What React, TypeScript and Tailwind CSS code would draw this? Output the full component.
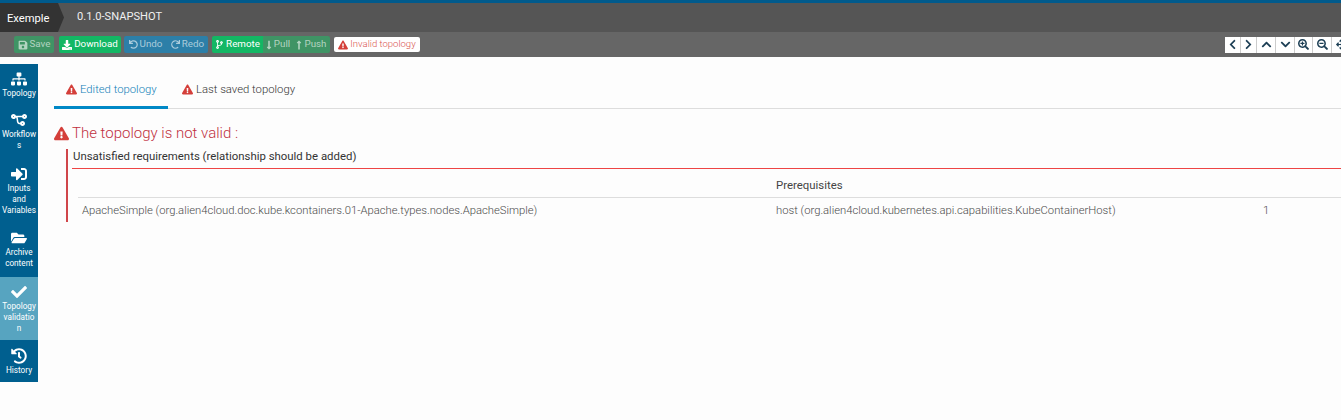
import { ReactNode } from "react";
import {
  FaSitemap, FaSave, FaDownload, FaUndo, FaRedo, FaCodeBranch, FaLongArrowAltDown, FaLongArrowAltUp,
  FaExclamationTriangle, FaChevronLeft, FaChevronRight, FaChevronUp, FaChevronDown,
  FaSearchPlus, FaSearchMinus, FaArrowsAlt, FaSignInAlt, FaFolderOpen, FaCheck, FaHistory,
} from "react-icons/fa";

function ToolButton({icon, label, color, width, dim, first, last}: {
  icon: ReactNode, label: string, color: string, width: string, dim?: boolean, first?: boolean, last?: boolean
}) {
  return (
    <div className={`flex h-[17px] items-center justify-center gap-[2px] text-[9.8px] ${width} ${color} ${dim ? "text-[#ffffff99]" : "text-white"} ${first ? "rounded-l-[2px]" : ""} ${last ? "rounded-r-[2px]" : ""}`}>
      {icon}
      <span>{label}</span>
    </div>
  );
}

function NavItem({icon, lines, active, height, top}: {icon: ReactNode, lines: string[], active?: boolean, height: string, top: string}) {
  return (
    <div className={`flex w-[38px] flex-col items-center text-white ${top} ${height} ${active ? "bg-[#57a4c0]" : ""}`}>
      <div className="flex h-[17px] items-center text-[16px]">{icon}</div>
      <div className="mt-[1px] text-center text-[8.2px] leading-[11px]">
        {lines.map((line)=><div key={line}>{line}</div>)}
      </div>
    </div>
  );
}

const zoomButtons = [
  {icon: <FaChevronLeft />, width: "w-[15px]"},
  {icon: <FaChevronRight />, width: "w-[15px]"},
  {icon: <FaChevronUp />, width: "w-[18px]"},
  {icon: <FaChevronDown />, width: "w-[18px]"},
  {icon: <FaSearchPlus />, width: "w-[17px]"},
  {icon: <FaSearchMinus />, width: "w-[18px]"},
  {icon: <FaArrowsAlt />, width: "w-[18px]"},
];

export default function App() {
  return (
    <div className="h-[420px] w-[1341px] overflow-hidden bg-[#fdfdfd] font-['Roboto',sans-serif]">
      <div className="h-[3px] bg-[#005a8c]" />
      <div className="flex h-[29px] bg-[#555555] text-[#f0f0f0]">
        <div className="flex h-full w-[64px] items-center bg-[#333333] pl-[7px] pt-[3px] text-[11.2px] text-white [clip-path:polygon(0_0,58px_0,64px_50%,58px_100%,0_100%)]">Exemple</div>
        <div className="ml-[13px] pt-[6px] text-[11.1px]">0.1.0-SNAPSHOT</div>
      </div>
      <div className="flex h-[25px] items-center bg-[#666666] pl-[14px]">
        <ToolButton icon={<FaSave className="text-[10px]" />} label="Save" color="bg-[#3f9465]" width="w-[40px]" dim first last />
        <div className="ml-[5px]">
          <ToolButton icon={<FaDownload className="text-[10px]" />} label="Download" color="bg-[#13b764]" width="w-[62px]" first last />
        </div>
        <div className="ml-[3px] flex">
          <ToolButton icon={<FaUndo className="text-[9px]" />} label="Undo" color="bg-[#2c7fa8]" width="w-[43px]" dim first />
          <ToolButton icon={<FaRedo className="text-[9px]" />} label="Redo" color="bg-[#2c7fa8]" width="w-[41px]" dim last />
        </div>
        <div className="ml-[4px] flex">
          <ToolButton icon={<FaCodeBranch className="text-[9px]" />} label="Remote" color="bg-[#13b764]" width="w-[51px]" first />
          <ToolButton icon={<FaLongArrowAltDown className="-mx-[2px] text-[10px]" />} label="Pull" color="bg-[#3f9465]" width="w-[30px]" dim />
          <ToolButton icon={<FaLongArrowAltUp className="-mx-[2px] text-[10px]" />} label="Push" color="bg-[#3f9465]" width="w-[37px]" dim last />
        </div>
        <div className="ml-[4px] flex h-[15px] w-[86px] items-center justify-center gap-[2px] rounded-[2px] bg-white text-[9.5px] font-light text-[#d9534f]">
          <FaExclamationTriangle className="text-[10px] text-[#d43f3a]" />
          <span>Invalid topology</span>
        </div>
        <div className="ml-auto mr-[-9px] flex h-[16px] gap-[1px] bg-[#cccccc]">
          {zoomButtons.map((button, index)=>(
            <div key={index} className={`flex items-center justify-center bg-white text-[11px] text-[#1d3f55] ${button.width}`}>{button.icon}</div>
          ))}
        </div>
      </div>
      <div className="flex">
        <div className="mt-[7px] flex w-[38px] shrink-0 flex-col bg-[#005f8f]">
          <NavItem icon={<FaSitemap />} lines={["Topology"]} height="h-[42px]" top="pt-[6px]" />
          <NavItem icon={<FaCodeBranch className="rotate-90" />} lines={["Workflow", "s"]} height="h-[53px]" top="pt-[5px]" />
          <NavItem icon={<FaSignInAlt />} lines={["Inputs", "and", "Variables"]} height="h-[64px]" top="pt-[6px]" />
          <NavItem icon={<FaFolderOpen />} lines={["Archive", "content"]} height="h-[54px]" top="pt-[6px]" />
          <NavItem icon={<FaCheck />} lines={["Topology", "validatio", "n"]} height="h-[63px]" top="pt-[6px]" active />
          <NavItem icon={<FaHistory />} lines={["History"]} height="h-[42px]" top="pt-[7px]" />
        </div>
        <div className="min-w-0 flex-1 pl-[16px]">
          <div className="mt-[17px] flex h-[35px] border-b border-[#dddddd] text-[11.3px] font-light">
            <div className="flex h-[35px] w-[114px] items-start gap-[3px] border-b-[3px] border-[#0088c6] pl-[12px] pt-[8px] text-[#1080b8]">
              <FaExclamationTriangle className="mt-[2px] text-[11px] text-[#d43f3a]" />
              <span>Edited topology</span>
            </div>
            <div className="flex items-start gap-[3px] pl-[14px] pt-[8px] text-[#333333]">
              <FaExclamationTriangle className="mt-[2px] text-[11px] text-[#d43f3a]" />
              <span>Last saved topology</span>
            </div>
          </div>
          <div className="mt-[15px] flex items-center gap-[3px] text-[15px] font-light leading-[18px] text-[#c0303e]">
            <FaExclamationTriangle className="text-[15px] text-[#d43f3a]" />
            <span>The topology is not valid :</span>
          </div>
          <div className="ml-[12px] mt-[7px] h-[73px] border-l-2 border-[#d0464a] pl-[4px]">
            <div className="h-[20px] border-b border-[#ee4444] pl-[1px] text-[11.4px] leading-[15px] text-[#333333]">Unsatisfied requirements (relationship should be added)</div>
            <div className="ml-[6px] grid grid-cols-[698px_487px_1fr] text-[11.25px] font-light text-[#4a4a4a]">
              <div className="h-[29px] border-b border-[#dddddd]" />
              <div className="flex h-[29px] items-center border-b border-[#dddddd] pt-[5px] text-[11.4px] font-normal text-[#444444]">Prerequisites</div>
              <div className="h-[29px] border-b border-[#dddddd]" />
              <div className="pl-[4px] pt-[5px]">ApacheSimple (org.alien4cloud.doc.kube.kcontainers.01-Apache.types.nodes.ApacheSimple)</div>
              <div className="pt-[5px]">host (org.alien4cloud.kubernetes.api.capabilities.KubeContainerHost)</div>
              <div className="pt-[5px]">1</div>
            </div>
          </div>
        </div>
      </div>
    </div>
  );
}
